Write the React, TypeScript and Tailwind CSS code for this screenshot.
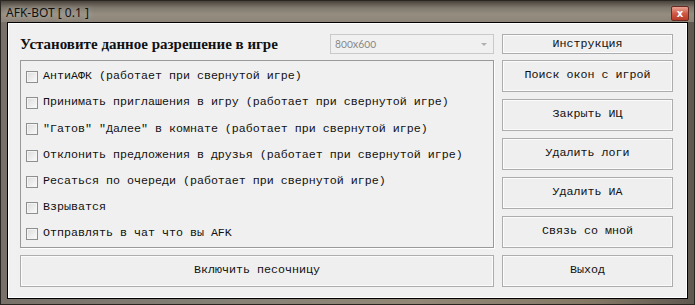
import React from "react";

const mono = { fontFamily: '"Liberation Mono", "Courier New", monospace' };

function Btn({ label, className = "" }: { label: string; className?: string }) {
  return (
    <div
      className={
        "flex items-center justify-center border border-[#adadad] bg-[#efefef] shadow-[inset_0_0_0_1px_#fbfbfb] text-[11.67px] text-[#111] " +
        className
      }
      style={mono}
    >
      {label}
    </div>
  );
}

function Check({ label }: { label: string }) {
  return (
    <div className="flex h-[26.17px] items-center pl-[5px]">
      <div className="h-[12px] w-[12px] border border-[#8e8f8f] bg-gradient-to-br from-[#dcdcdc] to-[#fbfbfb] shadow-[inset_0_0_0_1px_#f4f4f4]" />
      <span className="ml-[5px] text-[11.67px] text-[#111] whitespace-pre" style={mono}>
        {label}
      </span>
    </div>
  );
}

export default function App() {
  const checks = [
    "АнтиАФК (работает при свернутой игре)",
    "Принимать приглашения в игру (работает при свернутой игре)",
    '"Гатов" "Далее" в комнате (работает при свернутой игре)',
    "Отклонить предложения в друзья (работает при свернутой игре)",
    "Ресаться по очереди (работает при свернутой игре)",
    "Взрыватся",
    "Отправлять в чат что вы AFK",
  ];
  const buttons = ["Поиск окон с игрой", "Закрыть ИЦ", "Удалить логи", "Удалить ИА", "Связь со мной"];
  return (
    <div className="relative flex h-[305px] w-[695px] flex-col bg-[linear-gradient(90deg,#77716a_0%,#858076_30%,#938877_60%,#857966_85%,#5f5850_100%)]">
      <div className="absolute inset-0 border border-[#2a2622] pointer-events-none" />
      <div className="flex h-[22px] shrink-0 items-center pl-[6px] pt-[3px] bg-[linear-gradient(180deg,#3f3a34_0%,#7f786d_35%,#958d80_65%,#8c8478_100%)]">
        <span
          className="text-[12px] text-[#111] [text-shadow:0_0_6px_rgba(255,255,255,0.55)]"
          style={{ fontFamily: '"Noto Sans", "Open Sans", sans-serif' }}
        >
          AFK-BOT [ 0.1 ]
        </span>
        <div className="absolute right-[6px] top-[6px] flex h-[15px] w-[18px] items-center justify-center rounded-[2px] border border-[#6b2a22] bg-[linear-gradient(180deg,#e9a395_0%,#cf5a46_50%,#b83a26_100%)]">
          <span className="text-[10px] font-bold leading-none text-white" style={{ fontFamily: '"DejaVu Sans", sans-serif' }}>
            x
          </span>
        </div>
      </div>
      <div className="mx-[7px] mb-[6px] flex-1 border border-black bg-[#f0f0f0] shadow-[inset_0_0_0_1px_#ffffff] pl-[12px] pr-[14px] pt-[11px]">
        <div className="grid grid-cols-[474px_171px] gap-x-[8px]">
          <div className="flex h-[20px] items-center">
            <span
              className="w-[310px] text-[15px] font-bold text-[#111]"
              style={{ fontFamily: '"Liberation Serif", "Times New Roman", serif' }}
            >
              Установите данное разрешение в игре
            </span>
            <div className="flex h-[20px] w-[164px] items-center justify-between border border-[#c9c9c9] bg-[#f0f0f0] pl-[4px] pr-[6px]">
              <span
                className="text-[11px] text-[#8a8a8a] [font-variant-numeric:oldstyle-nums]"
                style={{ fontFamily: 'Lato, "DejaVu Serif", serif' }}
              >
                800x600
              </span>
              <div className="h-0 w-0 border-x-[3px] border-t-[3px] border-x-transparent border-t-[#b0b0b0]" />
            </div>
          </div>
          <Btn label="Инструкция" className="h-[20px] pt-[1px]" />
        </div>
        <div className="mt-[6px] grid grid-cols-[474px_171px] gap-x-[8px]">
          <div className="h-[188px] border border-[#9a9a9a] shadow-[1px_1px_0_#ffffff] pt-[3px]">
            {checks.map((c) => (
              <Check key={c} label={c} />
            ))}
          </div>
          <div className="flex flex-col gap-[7px]">
            {buttons.map((b) => (
              <Btn key={b} label={b} className="h-[32px]" />
            ))}
          </div>
        </div>
        <div className="mt-[7px] grid grid-cols-[474px_171px] gap-x-[8px]">
          <Btn label="Включить песочницу" className="h-[32px]" />
          <Btn label="Выход" className="h-[32px]" />
        </div>
      </div>
    </div>
  );
}
